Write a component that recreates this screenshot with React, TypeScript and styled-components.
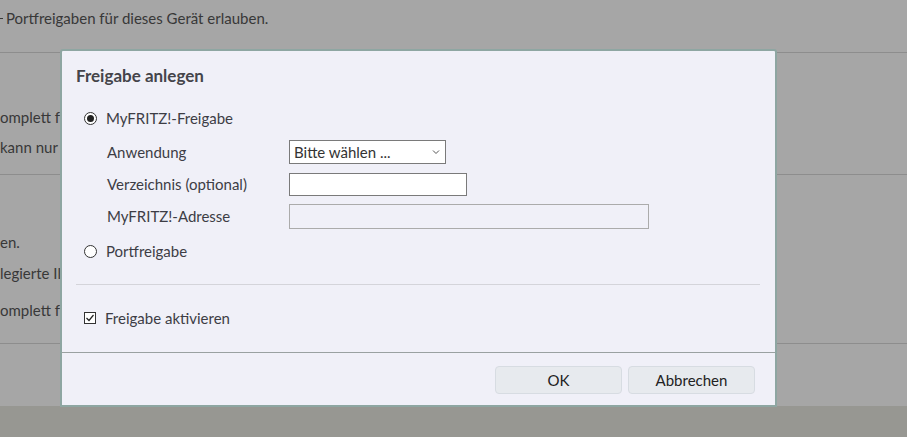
import styled, { createGlobalStyle } from "styled-components"

const COLORS = {
  page: "#a6a6a6",
  pageText: "#383838",
  pageLine: "#8d8d8d",
  pageFooter: "#979792",
  dialog: "#f0f0f8",
  dialogBorder: "#8ea6a2",
  text: "#3d3d45",
  divider: "#d4d4da",
  field: "#7a7a7a",
  fieldOff: "#ababab",
  button: "#e7eaee",
  buttonBorder: "#d7dce2",
}

const GlobalStyle = createGlobalStyle`
  html, body {
    margin: 0;
    height: 100%;
    overflow: hidden;
  }
  body {
    font-family: Lato, "Noto Sans", sans-serif;
    font-size: 15px;
    color: ${COLORS.text};
  }
  #root {
    height: 100%;
  }
`

const Page = styled.div`
  height: 100%;
  display: flex;
  flex-direction: column;
  background: ${COLORS.page};
  color: ${COLORS.pageText};
  position: relative;
`

const Section = styled.div<{ $top: number; $bottom: number; $gap: number }>`
  display: flex;
  flex-direction: column;
  gap: ${({ $gap }) => $gap}px;
  padding: ${({ $top }) => $top}px 0 ${({ $bottom }) => $bottom}px;
  border-bottom: 1px solid ${COLORS.pageLine};
  line-height: 24px;
  white-space: nowrap;
`

const Lead = styled.div`
  display: flex;
  align-items: center;
  gap: 3px;
  line-height: 20px;
`

const Dash = styled.span`
  width: 3px;
  height: 1px;
  background: ${COLORS.pageText};
`

const Clipped = styled.div<{ $top?: number }>`
  width: 60px;
  overflow: hidden;
  margin-top: ${({ $top }) => $top ?? 0}px;
`

const Spacer = styled.div`
  height: 62px;
`

const PageFooter = styled.div`
  flex: 1;
  background: ${COLORS.pageFooter};
`

const Dialog = styled.div`
  position: absolute;
  left: 60px;
  top: 49px;
  width: 717px;
  height: 358px;
  box-sizing: border-box;
  display: flex;
  flex-direction: column;
  background: ${COLORS.dialog};
  border: 2px solid ${COLORS.dialogBorder};
  border-radius: 3px 3px 0 0;
  color: ${COLORS.text};
`

const Body = styled.div`
  flex: 1;
  display: flex;
  flex-direction: column;
  padding: 13px 15px 0 14px;
`

const Title = styled.h2`
  margin: 0;
  font-size: 17px;
  font-weight: 700;
  line-height: 24px;
  color: #44444a;
`

const Choice = styled.label<{ $top: number }>`
  display: flex;
  align-items: center;
  gap: 9px;
  height: 26px;
  margin-top: ${({ $top }) => $top}px;
  padding-left: 8px;
`

const Radio = styled.span<{ $checked?: boolean }>`
  width: 13px;
  height: 13px;
  box-sizing: border-box;
  border: 1.3px solid #333;
  border-radius: 50%;
  background: #fff;
  display: grid;
  place-items: center;
  &::after {
    content: "";
    width: 7px;
    height: 7px;
    border-radius: 50%;
    background: ${({ $checked }) => ($checked ? "#222" : "transparent")};
  }
`

const Check = styled.span`
  width: 12px;
  height: 12px;
  box-sizing: border-box;
  border: 1px solid #333;
  background: #fff;
  display: grid;
  place-items: center;
  svg {
    width: 10px;
    height: 10px;
  }
`

const Fields = styled.div`
  display: grid;
  grid-template-columns: 182px auto;
  grid-auto-rows: 32px;
  align-items: center;
  margin-top: 5px;
  padding-left: 31px;
`

const FieldLabel = styled.span``

const Select = styled.div`
  width: 157px;
  height: 24px;
  box-sizing: border-box;
  border: 1px solid ${COLORS.field};
  background: #fff;
  display: flex;
  align-items: center;
  justify-content: space-between;
  padding: 0 5px 0 4px;
  color: #333;
  svg {
    width: 8px;
    height: 6px;
  }
`

const Input = styled.div<{ $width: number; $height: number; $disabled?: boolean }>`
  width: ${({ $width }) => $width}px;
  height: ${({ $height }) => $height}px;
  box-sizing: border-box;
  border: 1px solid ${({ $disabled }) => ($disabled ? COLORS.fieldOff : COLORS.field)};
  background: ${({ $disabled }) => ($disabled ? COLORS.dialog : "#fff")};
`

const Divider = styled.hr`
  margin: 20px 0 0;
  border: none;
  border-top: 1px solid ${COLORS.divider};
`

const Footer = styled.div`
  height: 53px;
  box-sizing: border-box;
  border-top: 1px solid #9aa1a1;
  display: flex;
  justify-content: flex-end;
  align-items: flex-start;
  gap: 6px;
  padding: 13px 20px 0;
`

const Button = styled.button`
  width: 127px;
  height: 28px;
  box-sizing: border-box;
  border: 1px solid ${COLORS.buttonBorder};
  border-radius: 4px;
  background: ${COLORS.button};
  font-family: inherit;
  font-size: 15px;
  color: #222;
  padding: 0;
`

const App = () => (
  <>
    <GlobalStyle />
    <Page>
      <Section $top={8} $bottom={24} $gap={0}>
        <Lead>
          <Dash />
          Portfreigaben für dieses Gerät erlauben.
        </Lead>
      </Section>
      <Section $top={52} $bottom={15} $gap={6}>
        <Clipped>omplett f</Clipped>
        <Clipped>kann nur</Clipped>
      </Section>
      <Section $top={55} $bottom={21} $gap={7}>
        <Clipped>en.</Clipped>
        <Clipped>legierte Il</Clipped>
        <Clipped $top={6}>omplett f</Clipped>
      </Section>
      <Spacer />
      <PageFooter />

      <Dialog>
        <Body>
          <Title>Freigabe anlegen</Title>
          <Choice $top={17}>
            <Radio $checked />
            MyFRITZ!-Freigabe
          </Choice>
          <Fields>
            <FieldLabel>Anwendung</FieldLabel>
            <Select>
              Bitte wählen ...
              <svg viewBox="0 0 8 6">
                <path d="M1 1.5 L4 4.5 L7 1.5" fill="none" stroke="#555" strokeWidth="1" />
              </svg>
            </Select>
            <FieldLabel>Verzeichnis (optional)</FieldLabel>
            <Input $width={178} $height={23} />
            <FieldLabel>MyFRITZ!-Adresse</FieldLabel>
            <Input $width={360} $height={25} $disabled />
          </Fields>
          <Choice $top={6}>
            <Radio />
            Portfreigabe
          </Choice>
          <Divider />
          <Choice $top={20}>
            <Check>
              <svg viewBox="0 0 10 10">
                <path d="M1.5 5 L4 7.5 L8.5 2" fill="none" stroke="#222" strokeWidth="1.2" />
              </svg>
            </Check>
            Freigabe aktivieren
          </Choice>
        </Body>
        <Footer>
          <Button>OK</Button>
          <Button>Abbrechen</Button>
        </Footer>
      </Dialog>
    </Page>
  </>
)

export default App
